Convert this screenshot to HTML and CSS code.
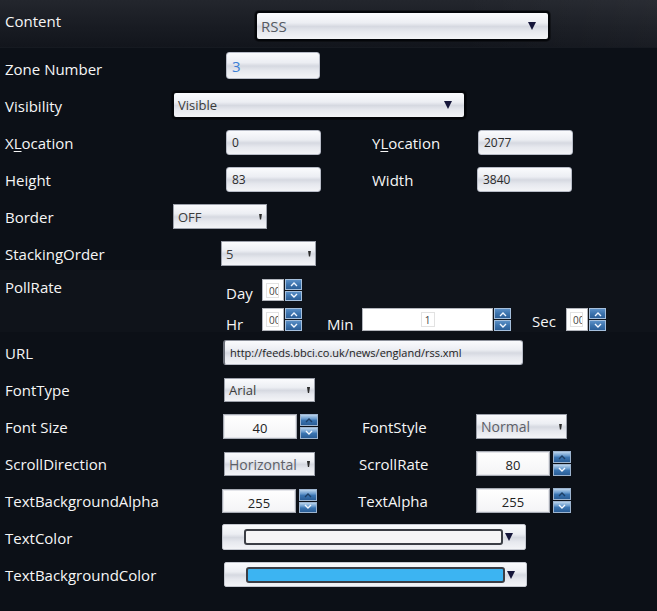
FILE: index.html
```html
<!DOCTYPE html>
<html>
<head>
<meta charset="utf-8">
<title>Zone Properties</title>
<link rel="stylesheet" href="styles.css">
</head>
<body>
<div class="form">
  <div class="row row-head">
    <span class="lbl w250">Content</span>
    <div class="combo combo-head"><span class="cval cval-big">RSS</span><span class="arrow"></span></div>
  </div>

  <div class="row">
    <span class="lbl w221">Zone Number</span>
    <div class="tbox tbox-zone"><span class="blue">3</span></div>
  </div>

  <div class="row">
    <span class="lbl w167">Visibility</span>
    <div class="combo combo-vis"><span class="cval">Visible</span><span class="arrow"></span></div>
  </div>

  <div class="row">
    <span class="lbl w221">X<u>L</u>ocation</span>
    <div class="tbox ctl w95">0</div>
    <span class="lbl ml51 w106">Y<u>L</u>ocation</span>
    <div class="tbox ctl w95">2077</div>
  </div>

  <div class="row">
    <span class="lbl w221">Height</span>
    <div class="tbox ctl w95">83</div>
    <span class="lbl ml51 w105">Width</span>
    <div class="tbox ctl w95">3840</div>
  </div>

  <div class="row">
    <span class="lbl w168">Border</span>
    <div class="scombo ctl w94"><span>OFF</span><span class="tick"></span></div>
  </div>

  <div class="row">
    <span class="lbl w216">StackingOrder</span>
    <div class="scombo ctl w95"><span>5</span><span class="tick"></span></div>
  </div>

  <div class="row row-poll">
    <span class="lbl lbl-poll w221">PollRate</span>
    <div class="poll">
      <div class="pline pline-1">
        <span class="plbl w36">Day</span>
        <div class="pspin w40">
          <div class="pv"><span class="pin">00</span></div>
          <div class="sb"><span class="up"><svg viewBox="0 0 10 6"><path d="M2 5 L5 2 L8 5"/></svg></span><span class="dn"><svg viewBox="0 0 10 6"><path d="M2 1 L5 4 L8 1"/></svg></span></div>
        </div>
      </div>
      <div class="pline pline-2">
        <span class="plbl w36">Hr</span>
        <div class="pspin w40">
          <div class="pv"><span class="pin">00</span></div>
          <div class="sb"><span class="up"><svg viewBox="0 0 10 6"><path d="M2 5 L5 2 L8 5"/></svg></span><span class="dn"><svg viewBox="0 0 10 6"><path d="M2 1 L5 4 L8 1"/></svg></span></div>
        </div>
        <span class="plbl ml25 w35">Min</span>
        <div class="pspin w149">
          <div class="pv pv-center"><span class="pin pin-one">1</span></div>
          <div class="sb"><span class="up"><svg viewBox="0 0 10 6"><path d="M2 5 L5 2 L8 5"/></svg></span><span class="dn"><svg viewBox="0 0 10 6"><path d="M2 1 L5 4 L8 1"/></svg></span></div>
        </div>
        <span class="plbl ml21 w34 plbl-sec">Sec</span>
        <div class="pspin w40">
          <div class="pv"><span class="pin">00</span></div>
          <div class="sb"><span class="up"><svg viewBox="0 0 10 6"><path d="M2 5 L5 2 L8 5"/></svg></span><span class="dn"><svg viewBox="0 0 10 6"><path d="M2 1 L5 4 L8 1"/></svg></span></div>
        </div>
      </div>
    </div>
  </div>

  <div class="row">
    <span class="lbl w218">URL</span>
    <div class="tbox tbox-url ctl w300">http://feeds.bbci.co.uk/news/england/rss.xml</div>
  </div>

  <div class="row">
    <span class="lbl w219">FontType</span>
    <div class="scombo ctl ctl-low w91"><span>Arial</span><span class="tick"></span></div>
  </div>

  <div class="row">
    <span class="lbl w218">Font Size</span>
    <div class="spin ctl w95">
      <div class="sv">40</div>
      <div class="sb"><span class="up"><svg viewBox="0 0 10 6"><path d="M2 5 L5 2 L8 5"/></svg></span><span class="dn"><svg viewBox="0 0 10 6"><path d="M2 1 L5 4 L8 1"/></svg></span></div>
    </div>
    <span class="lbl ml44 w114">FontStyle</span>
    <div class="scombo scombo-grey ctl w91"><span>Normal</span><span class="tick"></span></div>
  </div>

  <div class="row">
    <span class="lbl w219">ScrollDirection</span>
    <div class="scombo scombo-grey ctl ctl-low w91"><span>Horizontal</span><span class="tick"></span></div>
    <span class="lbl ml44 w117">ScrollRate</span>
    <div class="spin ctl w95">
      <div class="sv">80</div>
      <div class="sb"><span class="up"><svg viewBox="0 0 10 6"><path d="M2 5 L5 2 L8 5"/></svg></span><span class="dn"><svg viewBox="0 0 10 6"><path d="M2 1 L5 4 L8 1"/></svg></span></div>
    </div>
  </div>

  <div class="row">
    <span class="lbl w217">TextBackgroundAlpha</span>
    <div class="spin ctl ctl-low w95">
      <div class="sv">255</div>
      <div class="sb"><span class="up"><svg viewBox="0 0 10 6"><path d="M2 5 L5 2 L8 5"/></svg></span><span class="dn"><svg viewBox="0 0 10 6"><path d="M2 1 L5 4 L8 1"/></svg></span></div>
    </div>
    <span class="lbl ml41 w118">TextAlpha</span>
    <div class="spin ctl w95">
      <div class="sv">255</div>
      <div class="sb"><span class="up"><svg viewBox="0 0 10 6"><path d="M2 5 L5 2 L8 5"/></svg></span><span class="dn"><svg viewBox="0 0 10 6"><path d="M2 1 L5 4 L8 1"/></svg></span></div>
    </div>
  </div>

  <div class="row">
    <span class="lbl w217">TextColor</span>
    <div class="ccombo ctl-color w304"><span class="swatch"></span><span class="arrow"></span></div>
  </div>

  <div class="row">
    <span class="lbl w219">TextBackgroundColor</span>
    <div class="ccombo ctl w303"><span class="swatch swatch-blue"></span><span class="arrow"></span></div>
  </div>
</div>
</body>
</html>
```

FILE: styles.css
```css
* { box-sizing: border-box; }

html, body {
  margin: 0;
  padding: 0;
}

body {
  width: 657px;
  height: 611px;
  overflow: hidden;
  background: #0c1017;
  font-family: "Open Sans", "Noto Sans", sans-serif;
  color: #f4f4f4;
}

.form {
  display: flex;
  flex-direction: column;
}

.row {
  display: flex;
  align-items: flex-start;
  height: 37px;
  padding-left: 5px;
  flex: none;
}

.row-head {
  height: 48px;
  background: linear-gradient(90deg, rgba(255,255,255,0) 70%, rgba(255,255,255,0.03) 100%),
              linear-gradient(#23262d 0%, #181b22 60%, #12151c 100%);
  border-bottom: 1px solid #161a21;
}

.row-poll {
  height: 62px;
  background: #0f131a;
}

.lbl {
  flex: none;
  font-size: 15px;
  line-height: 20px;
  margin-top: 11px;
  white-space: nowrap;
  color: #f6f6f6;
}

.lbl u { text-decoration-thickness: 1px; text-underline-offset: 2px; }

.lbl-poll { margin-top: 7px; }

/* widths */
.w34 { width: 34px; } .w35 { width: 35px; } .w36 { width: 36px; }
.w40 { width: 40px; } .w91 { width: 91px; } .w94 { width: 94px; }
.w95 { width: 95px; } .w105 { width: 105px; } .w106 { width: 106px; }
.w114 { width: 114px; } .w117 { width: 117px; } .w118 { width: 118px; }
.w149 { width: 149px; } .w167 { width: 167px; } .w168 { width: 168px; }
.w216 { width: 216px; } .w217 { width: 217px; } .w218 { width: 218px; }
.w219 { width: 219px; } .w221 { width: 221px; } .w250 { width: 250px; }
.w300 { width: 300px; } .w303 { width: 303px; } .w304 { width: 304px; }
.ml21 { margin-left: 21px; } .ml25 { margin-left: 25px; }
.ml41 { margin-left: 41px; } .ml44 { margin-left: 44px; } .ml51 { margin-left: 51px; }

.ctl { flex: none; margin-top: 8px; height: 25px; }
.ctl-low { margin-top: 9px; height: 24px; }
.ctl-color { flex: none; margin-top: 7px; height: 26px; }

/* glossy light gradient shared by controls */
.tbox, .combo, .scombo, .ccombo {
  background: linear-gradient(#fafbfd 0%, #eceef3 38%, #d6d9e1 52%, #e6e8ee 70%, #f3f4f7 100%);
}

.tbox {
  display: flex;
  align-items: center;
  padding-left: 5px;
  border: 1px solid #b8bcc7;
  border-radius: 3px;
  font-size: 12px;
  color: #2a2a2a;
}

.tbox-zone {
  flex: none;
  width: 94px;
  height: 27px;
  margin-top: 4px;
  font-size: 15px;
}

.blue { color: #3a7fd6; }

.tbox-url {
  font-size: 11px;
  color: #1c1c1c;
  border-left: 2px solid #6c707a;
  border-top-color: #8d919b;
}

.combo {
  flex: none;
  display: flex;
  align-items: center;
  justify-content: space-between;
  border: 2px solid #04060a;
  border-radius: 4px;
  box-shadow: 0 0 0 1px rgba(0,0,0,0.35);
  padding: 0 12px 0 4px;
}

.combo-head {
  width: 295px;
  height: 30px;
  margin-top: 11px;
}

.combo-vis {
  width: 294px;
  height: 28px;
  margin-top: 6px;
}

.cval {
  font-size: 13px;
  color: #3a3a3a;
}

.cval-big {
  font-size: 15px;
  color: #555a62;
}

.arrow {
  width: 0;
  height: 0;
  border-left: 4.5px solid transparent;
  border-right: 4.5px solid transparent;
  border-top: 8px solid #15163a;
  flex: none;
}

.scombo {
  display: flex;
  align-items: center;
  justify-content: space-between;
  border: 1px solid #9da1ab;
  padding: 0 4px 0 4px;
  font-size: 13px;
  color: #3c3c3c;
}

.scombo-grey { color: #5d6068; font-size: 14px; }

.tick {
  flex: none;
  width: 3px;
  height: 6px;
  background: #2b2b2b;
  clip-path: polygon(0 0, 100% 0, 70% 100%, 30% 100%);
}

/* spinners */
.spin {
  display: flex;
  gap: 3px;
}

.sv {
  flex: 1;
  display: flex;
  align-items: center;
  justify-content: center;
  background: linear-gradient(#ffffff, #f4f4f6);
  border: 1px solid #a7abb4;
  box-shadow: inset 0 0 0 1px #e4e5ea;
  font-size: 13px;
  color: #222;
  padding-top: 3px;
}

.sb {
  flex: none;
  width: 18px;
  display: flex;
  flex-direction: column;
  gap: 1px;
}

.sb span {
  flex: 1;
  display: flex;
  align-items: center;
  justify-content: center;
  background: linear-gradient(#b9d3ec 0%, #6f9fd0 35%, #3a74b1 55%, #2a5d96 100%);
  border: 1px solid #9db4cf;
}

.sb svg {
  width: 10px;
  height: 6px;
}

.sb path {
  fill: none;
  stroke: #f4f8ff;
  stroke-width: 1.4;
}

.sb .up path { stroke: #1d3f66; }

/* poll rate */
.poll {
  display: flex;
  flex-direction: column;
  padding-top: 9px;
  gap: 5px;
}

.pline {
  display: flex;
  align-items: flex-start;
}

.plbl {
  flex: none;
  font-size: 15px;
  line-height: 20px;
  margin-top: 4px;
  color: #f6f6f6;
}

.pline-2 .plbl { margin-top: 6px; }
.pline-2 .plbl-sec { margin-top: 3px; }

.pspin {
  flex: none;
  display: flex;
  gap: 1px;
  height: 22px;
}

.pline-2 .pspin { height: 23px; }

.pspin .sb { width: 17px; }

.pspin .sb span {
  background: linear-gradient(#5b8fc6 0%, #3c73ad 50%, #2c5f98 100%);
  border: 1px solid #a5bfdc;
}

.pspin .sb .up path { stroke: #eef5ff; }

.pv {
  flex: 1;
  display: flex;
  align-items: center;
  padding-left: 3px;
  background: #ffffff;
  border: 1px solid #b3b6bd;
}

.pv-center { justify-content: center; padding-left: 0; }

.pin {
  display: block;
  width: 13px;
  height: 15px;
  overflow: hidden;
  border: 1px solid #e2e2e2;
  font-size: 10px;
  line-height: 14px;
  color: #444;
  padding-left: 2px;
  white-space: nowrap;
}

.pin-one {
  width: 14px;
  padding-left: 0;
  text-align: center;
}

/* colour pickers */
.ccombo {
  flex: none;
  display: flex;
  align-items: center;
  padding-left: 21px;
  border: 1px solid #c5c8d0;
  border-radius: 2px;
}

.swatch {
  flex: none;
  width: 259px;
  height: 16px;
  border: 2px solid #3b3e45;
  border-radius: 3px;
  background: #f6f6f7;
}

.swatch-blue { background: #3cb4f2; }

.ccombo .arrow { margin-left: 2px; }
```
